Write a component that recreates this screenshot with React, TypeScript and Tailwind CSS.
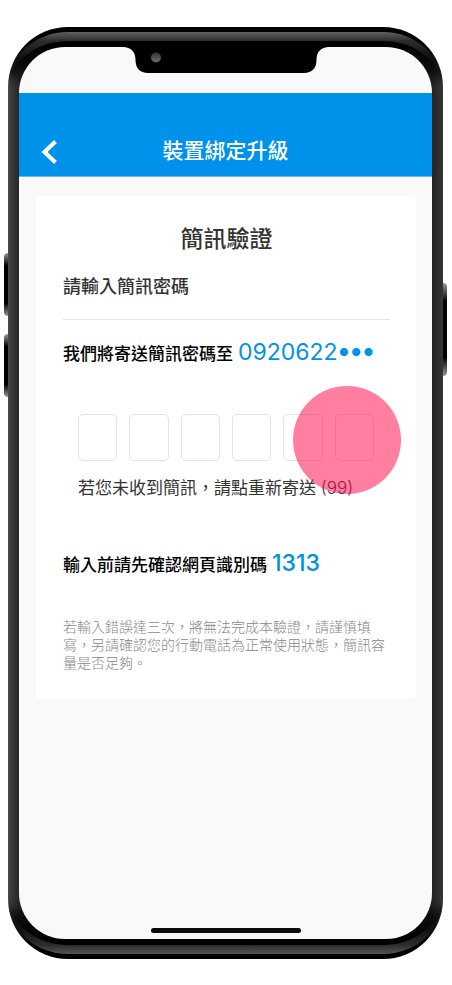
import { useState } from "react";
import type { ReactNode } from "react";

const CODE_LENGTH = 6;

function Notch() {
  return (
    <svg
      width="206"
      height="27"
      viewBox="0 0 206 27"
      className="mx-auto block"
      aria-hidden="true"
    >
      <defs>
        <linearGradient id="lens" x1="0" y1="0" x2="0" y2="1">
          <stop offset="0" stopColor="#333333" />
          <stop offset="1" stopColor="#6b6b6b" />
        </linearGradient>
      </defs>
      <path
        d="M0 0C8 0 12.500 5 12.500 13C12.500 21 17 26 25 26H181C189 26 193.500 21 193.500 13C193.500 5 198 0 206 0Z"
        fill="#000000"
      />
      <circle cx="33" cy="10.500" r="5" fill="url(#lens)" />
    </svg>
  );
}

function PhoneFrame({ children }: { children: ReactNode }) {
  return (
    <div className="relative flex flex-1">
      {/* side buttons */}
      <div className="absolute top-[226px] -left-1 h-[63px] w-2 rounded-l bg-[linear-gradient(#999,#000_20%,#000_80%,#999)]" />
      <div className="absolute top-[307px] -left-1 h-[63px] w-2 rounded-l bg-[linear-gradient(#999,#000_20%,#000_80%,#999)]" />
      <div className="absolute top-[256px] -right-1 h-[93px] w-2 rounded-r bg-[linear-gradient(#999,#000_20%,#000_80%,#999)]" />

      {/* bezel layers */}
      <div className="relative flex flex-1 rounded-[60px] bg-[linear-gradient(#000_16px,transparent_60px,transparent_calc(100%-60px),#000_calc(100%-16px)),linear-gradient(90deg,#555_0,#404040_1px,#262626_11px,#222_calc(100%-11px),#363636)] py-[5px]">
        <div className="flex flex-1 rounded-[60px/55px] bg-[linear-gradient(#606060,#2c2c2c_9px,#101010_26px,transparent_50px,transparent_calc(100%-50px),#101010_calc(100%-26px),#2c2c2c_calc(100%-9px),#555)] py-[9px]">
          <div className="flex flex-1 rounded-[60px/50px] bg-[linear-gradient(#000_6px,transparent_36px,transparent_calc(100%-36px),#000_calc(100%-6px))] px-[11px] py-[6px]">
            <div className="flex min-w-0 flex-1 flex-col overflow-hidden rounded-[46px] bg-[#f9f9f9]">
              {children}
            </div>
          </div>
        </div>
      </div>
    </div>
  );
}

function Header() {
  return (
    <header className="grid h-[84px] grid-cols-[60px_1fr_60px] items-end border-b border-[#6bb9f2] bg-[#0091eb] pb-[9px] text-white">
      <button type="button" aria-label="返回" className="flex h-[30px] items-center pl-[22px]">
        <svg width="17" height="26" viewBox="0 0 17 26" fill="none" aria-hidden="true">
          <path d="M14.500 2.500L3.500 13L14.500 23.500" stroke="currentColor" strokeWidth="4.200" />
        </svg>
      </button>
      <h1 className="text-center text-[21px] leading-8 font-medium">裝置綁定升級</h1>
    </header>
  );
}

function CodeInputs() {
  const [code, setCode] = useState<string[]>(Array(CODE_LENGTH).fill(""));

  const handleChange = (index: number, value: string) => {
    setCode(code.map((digit, i) => (i === index ? value : digit)));
  };

  return (
    <div className="relative mt-11 pr-4 pl-[15px]">
      <div className="grid grid-cols-6 gap-3">
        {code.map((digit, i) => (
          <input
            key={i}
            type="text"
            inputMode="numeric"
            maxLength={1}
            aria-label={`簡訊密碼第 ${i + 1} 碼`}
            value={digit}
            onChange={(e) => handleChange(i, e.target.value)}
            className="h-[47px] w-full min-w-0 rounded-[5px] border border-[#e4e4e4] bg-white text-center text-xl text-[#333] outline-none"
          />
        ))}
      </div>
      {/* tap marker */}
      <div className="pointer-events-none absolute -top-7 -right-[11px] z-10 size-[108px] rounded-full bg-[#ff0044]/50" />
    </div>
  );
}

export default function App() {
  return (
    <div
      lang="zh-Hant"
      className="flex min-h-screen flex-col bg-white pt-[27px] pr-[9px] pb-[26px] pl-2 font-['Inter','Noto_Sans_CJK_TC',sans-serif]"
    >
      <PhoneFrame>
        <div className="h-[46px]">
          <Notch />
        </div>
        <Header />

        <main className="mt-[19px] mr-4 ml-[17px] rounded-[5px] bg-white pt-[27px] pr-[26px] pb-[27px] pl-[27px]">
          <h2 className="text-center text-[23px] leading-8 font-medium text-[#333]">簡訊驗證</h2>
          <p className="mt-[18px] border-b border-[#e4e4e4] pb-[18px] text-lg leading-7 font-medium text-[#333]">
            請輸入簡訊密碼
          </p>

          <p className="mt-4 flex items-baseline gap-[5px] text-[17px] leading-8 font-medium whitespace-nowrap text-black">
            我們將寄送簡訊密碼至
            <span className="text-[23px] leading-8 font-normal text-[#0091eb]">
              0920622<span className="text-[26px] leading-none font-bold">•••</span>
            </span>
          </p>

          <CodeInputs />

          <p className="mt-[13px] pl-[15px] text-[17px] leading-7 whitespace-nowrap text-[#333]">
            若您未收到簡訊，請點重新寄送 <span className="font-light">(99)</span>
          </p>

          <p className="mt-[45px] flex items-baseline gap-[5px] text-[17px] leading-8 font-medium whitespace-nowrap text-black">
            輸入前請先確認網頁識別碼
            <span className="text-[23px] leading-8 text-[#0091eb]">1313</span>
          </p>

          <p className="mt-[37px] text-sm leading-[18px] font-light text-[#888]">
            若輸入錯誤達三次，將無法完成本驗證，請謹慎填寫，另請確認您的行動電話為正常使用狀態，簡訊容量是否足夠。
          </p>
        </main>

        <div className="mx-auto mt-auto mb-[6px] h-[5px] w-[150px] rounded-full bg-[#0b0b0b]" />
      </PhoneFrame>
    </div>
  );
}
